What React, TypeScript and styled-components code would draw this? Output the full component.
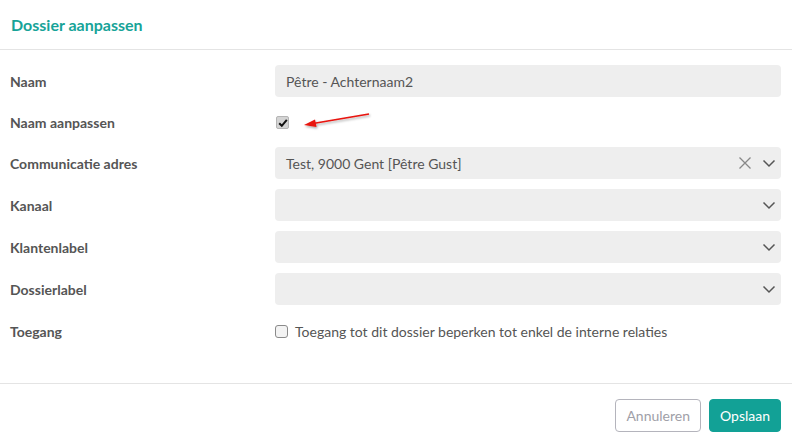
import React, { useState } from 'react';
import styled, { createGlobalStyle } from 'styled-components';

const GlobalStyle = createGlobalStyle`
  html, body {
    margin: 0;
    padding: 0;
    background: #ffffff;
    font-family: Lato, "Open Sans", Arial, sans-serif;
    color: #555555;
  }
  * { box-sizing: border-box; }
`;

const Modal = styled.div`
  width: 792px;
  height: 444px;
  display: flex;
  flex-direction: column;
  background: #ffffff;
`;

const Header = styled.div`
  height: 50px;
  display: flex;
  align-items: center;
  padding: 0 11px;
  border-bottom: 1px solid #e4e4e4;
`;

const Title = styled.h1`
  margin: 0;
  font-size: 16px;
  font-weight: 700;
  color: #17a398;
`;

const Body = styled.div`
  display: flex;
  flex-direction: column;
  gap: 10px;
  padding: 15px 11px 36px 10px;
  border-bottom: 1px solid #e4e4e4;
`;

const Row = styled.div<{ $height?: number }>`
  display: grid;
  grid-template-columns: 265px 1fr;
  align-items: center;
  height: ${p => p.$height ?? 32}px;
`;

const Label = styled.label`
  font-size: 14px;
  font-weight: 700;
  color: #555555;
`;

const Field = styled.div`
  height: 32px;
  display: flex;
  align-items: center;
  padding: 0 0 0 11px;
  background: #eeeeee;
  border-radius: 4px;
  font-size: 14px;
  color: #555555;
`;

const Value = styled.span`
  flex: 1;
`;

const IconSlot = styled.span`
  display: flex;
  align-items: center;
  justify-content: center;
  width: 24px;
  height: 32px;
  color: #666;
`;

const CheckCell = styled.div`
  position: relative;
  display: flex;
  align-items: center;
  gap: 7px;
  font-size: 14px;
  color: #555555;
`;

const Box = styled.span<{ $checked?: boolean }>`
  width: 13px;
  height: 13px;
  border-radius: ${p => (p.$checked ? '2px' : '3px')};
  border: 1px solid ${p => (p.$checked ? '#b5b5b5' : '#8a8a8a')};
  background: ${p => (p.$checked ? '#d4d4d4' : '#f3f3f3')};
  display: flex;
  align-items: center;
  justify-content: center;
  margin-left: ${p => (p.$checked ? '1px' : '0')};
  margin-top: 1px;
`;

const Arrow = styled.svg`
  position: absolute;
  left: 26px;
  top: -5px;
  overflow: visible;
`;

const Footer = styled.div`
  flex: 1;
  display: flex;
  justify-content: flex-end;
  align-items: flex-start;
  gap: 8px;
  padding: 15px 11px 0 0;
`;

const Button = styled.button<{ $primary?: boolean }>`
  height: 33px;
  padding: 0 10px;
  font-family: Lato, "Open Sans", Arial, sans-serif;
  font-size: 14px;
  border-radius: 4px;
  cursor: pointer;
  border: 1px solid ${p => (p.$primary ? '#12a196' : '#b4b4bc')};
  background: ${p => (p.$primary ? '#12a196' : '#ffffff')};
  color: ${p => (p.$primary ? '#ffffff' : '#a0a0a8')};
`;

const Chevron = () => (
  <svg width="14" height="14" viewBox="0 0 14 14">
    <path d="M1.5 4.5 L7 10 L12.5 4.5" fill="none" stroke="#555" strokeWidth="1.5" />
  </svg>
);

const Cross = () => (
  <svg width="14" height="14" viewBox="0 0 14 14">
    <path d="M1.5 1.5 L12.5 12.5 M12.5 1.5 L1.5 12.5" fill="none" stroke="#888" strokeWidth="1.3" />
  </svg>
);

const Tick = () => (
  <svg width="10" height="10" viewBox="0 0 10 10">
    <path d="M1.2 5.2 L3.8 7.8 L8.8 1.8" fill="none" stroke="#111" strokeWidth="2" />
  </svg>
);

const SelectField: React.FC<{ value?: string; clearable?: boolean }> = ({ value, clearable }) => (
  <Field>
    <Value>{value}</Value>
    {clearable && (
      <IconSlot>
        <Cross />
      </IconSlot>
    )}
    <IconSlot>
      <Chevron />
    </IconSlot>
  </Field>
);

export default function App() {
  const [restricted] = useState(false);

  return (
    <>
      <GlobalStyle />
      <Modal>
        <Header>
          <Title>Dossier aanpassen</Title>
        </Header>
        <Body>
          <Row>
            <Label>Naam</Label>
            <Field>
              <Value>Pêtre - Achternaam2</Value>
            </Field>
          </Row>
          <Row $height={30}>
            <Label>Naam aanpassen</Label>
            <CheckCell>
              <Box $checked>
                <Tick />
              </Box>
              <Arrow width="70" height="20" viewBox="0 0 70 20">
                <defs>
                  <filter id="sh" x="-20%" y="-50%" width="140%" height="200%">
                    <feDropShadow dx="1" dy="1.5" stdDeviation="1" floodColor="#000" floodOpacity="0.35" />
                  </filter>
                </defs>
                <g filter="url(#sh)">
                  <path d="M68 4 L12 13.5" stroke="#e8120c" strokeWidth="1.6" fill="none" />
                  <path d="M3 15 L14 9.5 L15.5 17 Z" fill="#e8120c" />
                </g>
              </Arrow>
            </CheckCell>
          </Row>
          <Row>
            <Label>Communicatie adres</Label>
            <SelectField value="Test, 9000 Gent [Pêtre Gust]" clearable />
          </Row>
          <Row>
            <Label>Kanaal</Label>
            <SelectField />
          </Row>
          <Row>
            <Label>Klantenlabel</Label>
            <SelectField />
          </Row>
          <Row>
            <Label>Dossierlabel</Label>
            <SelectField />
          </Row>
          <Row>
            <Label>Toegang</Label>
            <CheckCell>
              <Box $checked={restricted} />
              <span>Toegang tot dit dossier beperken tot enkel de interne relaties</span>
            </CheckCell>
          </Row>
        </Body>
        <Footer>
          <Button>Annuleren</Button>
          <Button $primary>Opslaan</Button>
        </Footer>
      </Modal>
    </>
  );
}
